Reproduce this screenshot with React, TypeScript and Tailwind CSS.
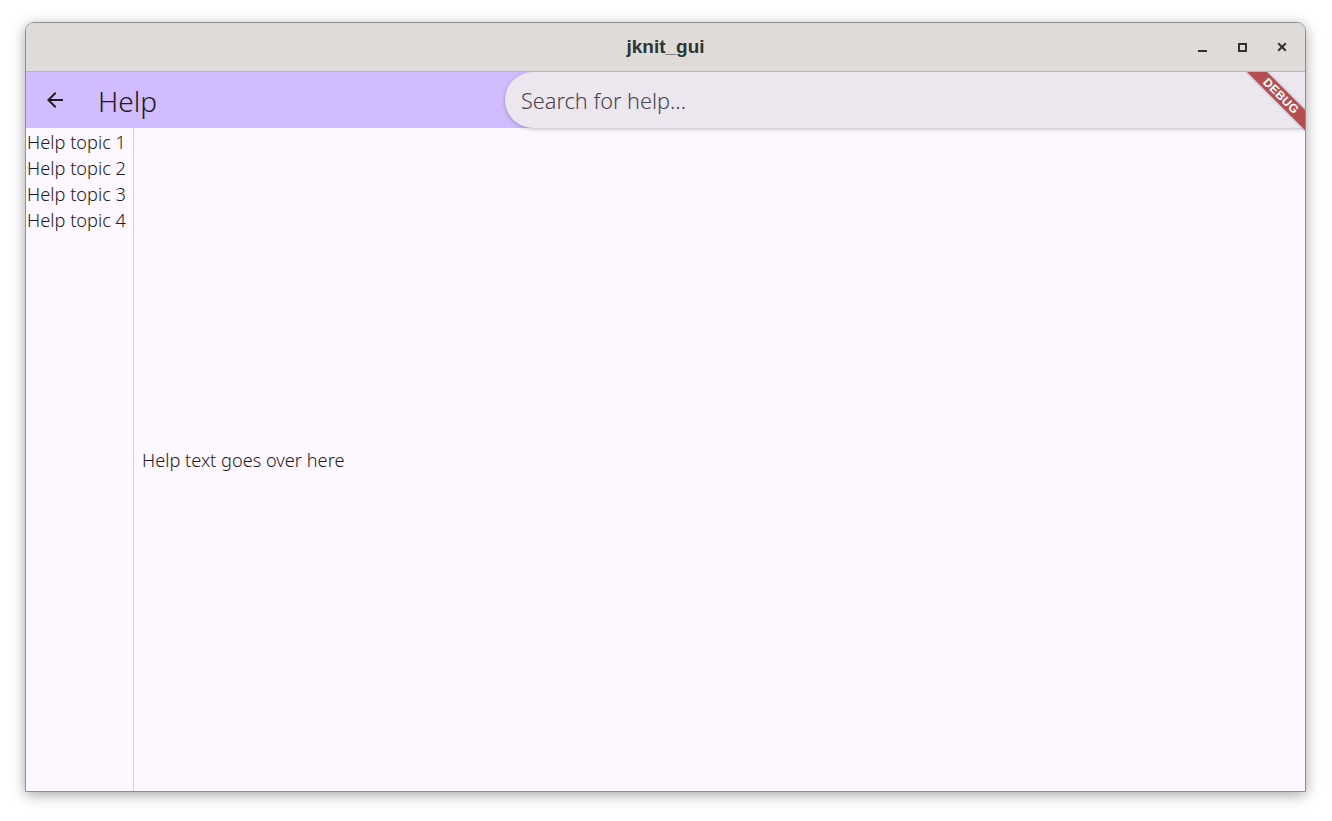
import React from "react";

const appFont = { fontFamily: '"Noto Sans", "Open Sans", sans-serif' };

export default function App() {
  return (
    <div className="w-[1332px] h-[821px] bg-white pl-[25px] pt-[22px] overflow-hidden" style={appFont}>
      <div className="w-[1281px] h-[770px] flex flex-col rounded-t-[9px] border border-[#8f8f8f] overflow-hidden shadow-[0_3px_14px_rgba(0,0,0,0.35)] bg-[#fdf7ff]">
        {/* Title bar */}
        <div className="h-[49px] shrink-0 bg-[#dedbd8] border-b border-[#b8b5b2] flex items-center relative">
          <div
            className="flex-1 text-center text-[19px] font-bold text-[#2e3436] pt-[1px]"
            style={{ fontFamily: '"Liberation Sans", Arial, sans-serif' }}
          >
            jknit_gui
          </div>
          <div className="absolute right-0 top-0 h-full flex items-center">
            <div className="w-[40px] flex justify-center">
              <div className="w-[9px] h-[2px] bg-[#2e3436] mt-[7px]" />
            </div>
            <div className="w-[40px] flex justify-center">
              <div className="w-[9px] h-[9px] border-2 border-[#2e3436]" />
            </div>
            <div className="w-[40px] flex justify-center mr-[3px]">
              <svg width="10" height="10" viewBox="0 0 10 10">
                <path d="M1.2 1.2 L8.8 8.8 M8.8 1.2 L1.2 8.8" stroke="#2e3436" strokeWidth="2" />
              </svg>
            </div>
          </div>
        </div>

        {/* Body */}
        <div className="flex-1 flex flex-col relative overflow-hidden">
          {/* App bar */}
          <div className="h-[56px] shrink-0 bg-[#d0bcff] flex items-center">
            <div className="w-[56px] flex justify-center pl-[1px]">
              <svg width="24" height="24" viewBox="0 0 24 24">
                <path d="M20 11H7.83l5.59-5.59L12 4l-8 8 8 8 1.41-1.41L7.83 13H20v-2z" fill="#1d1b20" />
              </svg>
            </div>
            <div className="ml-[16px] text-[28px] font-[350] text-[#1d1b20] leading-none pt-[1px]">Help</div>
            <div className="flex-1" />
            <div className="w-[800px] h-[56px] rounded-l-full bg-[#ece6ee] shadow-[0_1px_4px_rgba(0,0,0,0.25)] flex items-center pl-[16px] text-[21.7px] font-[350] text-[#49454f] pt-[2px]">
              Search for help...
            </div>
          </div>

          {/* Content */}
          <div className="flex-1 flex">
            <div className="w-[108px] shrink-0 border-r border-[#d5cfd8] flex flex-col pt-[2px]">
              {["Help topic 1", "Help topic 2", "Help topic 3", "Help topic 4"].map((t) => (
                <div key={t} className="h-[26px] flex items-center justify-end pr-[7px] text-[18.2px] font-[350] text-[#1d1b20] whitespace-nowrap">
                  {t}
                </div>
              ))}
            </div>
            <div className="flex-1 flex items-center pl-[8px] pt-[2px] text-[18.2px] font-[350] text-[#1d1b20]">
              Help text goes over here
            </div>
          </div>

          {/* Debug banner */}
          <div className="absolute top-0 right-0 w-[90px] h-[90px] overflow-hidden pointer-events-none">
            <div
              className="absolute w-[120px] h-[14px] bg-[#a01c1c]/75 flex items-center justify-center text-white font-bold text-[12px] tracking-[0.3px] shadow-[0_0_3px_rgba(0,0,0,0.3)]"
              style={{ left: 90 - 24 - 60, top: 24 - 7, transform: "rotate(45deg)", fontFamily: '"Liberation Sans", Arial, sans-serif' }}
            >
              DEBUG
            </div>
          </div>
        </div>
      </div>
    </div>
  );
}
